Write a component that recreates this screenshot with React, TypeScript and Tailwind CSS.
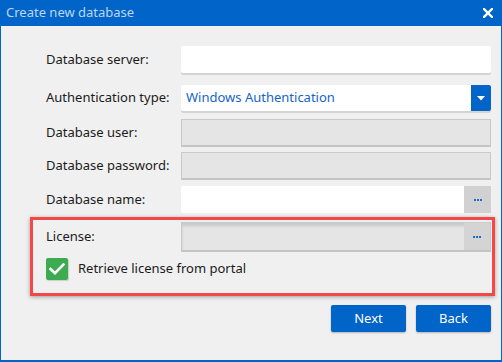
import React from "react";

const Dots = () => (
  <div className="flex gap-[1px]">
    <span className="w-[2px] h-[2px] bg-[#1a6fd0]"></span>
    <span className="w-[2px] h-[2px] bg-[#1a6fd0]"></span>
    <span className="w-[2px] h-[2px] bg-[#1a6fd0]"></span>
  </div>
);

const Label = ({ children }: { children: React.ReactNode }) => (
  <div className="w-[135px] shrink-0 text-[13px] text-[#1b1b1b]">{children}</div>
);

const App = () => {
  return (
    <div
      className="w-[502px] h-[362px] flex flex-col bg-[#0064c8]"
      style={{ fontFamily: '"Noto Sans", "Open Sans", sans-serif' }}
    >
      {/* Title bar */}
      <div className="h-[26px] shrink-0 flex items-center justify-between pl-[6px] pr-[8px]">
        <span className="text-[13px] text-[#bcd6f2]">Create new database</span>
        <svg width="10" height="10" viewBox="0 0 10 10" className="mr-[1px]">
          <path d="M1 1 L9 9 M9 1 L1 9" stroke="#fff" strokeWidth="2.4" strokeLinecap="square" />
        </svg>
      </div>

      {/* Body */}
      <div className="flex-1 mx-[1px] mb-[2px] bg-[#f0f0f0] flex flex-col pl-[29px] pr-[6px] pt-[20px]">
        {/* Database server */}
        <div className="flex items-center pl-[16px] pr-[4px]">
          <Label>Database server:</Label>
          <div className="flex-1 h-[27px] bg-white rounded-[2px] shadow-[0_2px_0_#d4d4d4]"></div>
        </div>

        {/* Authentication type */}
        <div className="flex items-center pl-[16px] pr-[4px] mt-[12px]">
          <Label>Authentication type:</Label>
          <div className="flex-1 h-[26px] flex bg-white rounded-[2px] shadow-[0_2px_0_#d4d4d4]">
            <div className="flex-1 flex items-center pl-[5px] text-[13px] text-[#1565c8]">
              Windows Authentication
            </div>
            <div className="w-[20px] bg-[#0064c8] rounded-r-[2px] flex items-center justify-center">
              <svg width="8" height="5" viewBox="0 0 8 5">
                <path d="M0 0 H8 L4 4.5 Z" fill="#fff" />
              </svg>
            </div>
          </div>
        </div>

        {/* Database user */}
        <div className="flex items-center pl-[16px] pr-[4px] mt-[8px]">
          <Label>Database user:</Label>
          <div className="flex-1 h-[28px] bg-[#e5e5e5] border border-[#cacaca] border-b-2 border-b-[#c4c4c4]"></div>
        </div>

        {/* Database password */}
        <div className="flex items-center pl-[16px] pr-[4px] mt-[5px]">
          <Label>Database password:</Label>
          <div className="flex-1 h-[28px] bg-[#e5e5e5] border border-[#cacaca] border-b-2 border-b-[#c4c4c4]"></div>
        </div>

        {/* Database name */}
        <div className="flex items-center pl-[16px] pr-[4px] mt-[6px]">
          <Label>Database name:</Label>
          <div className="flex-1 h-[27px] flex bg-white rounded-l-[2px]">
            <div className="flex-1"></div>
            <div className="w-[27px] bg-[#d1d1d1] flex items-center justify-center">
              <Dots />
            </div>
          </div>
        </div>

        {/* Highlighted license block */}
        <div className="mt-[4px] border-[3px] border-[#f24848] shadow-[0_1px_4px_rgba(0,0,0,0.35)] pl-[13px] pr-[1px] pt-[2px] h-[79px]">
          <div className="flex items-center">
            <Label>License:</Label>
            <div className="flex-1 h-[30px] flex bg-[#e5e5e5] border border-[#cacaca] border-b-2 border-b-[#c4c4c4] shadow-[inset_0_3px_3px_rgba(0,0,0,0.12)]">
              <div className="flex-1"></div>
              <div className="w-[26px] bg-[#d4d4d4] flex items-center justify-center">
                <Dots />
              </div>
            </div>
          </div>
          <div className="flex items-center mt-[6px]">
            <div className="w-[22px] h-[22px] rounded-[2px] bg-[#3dab50] flex items-center justify-center shadow-[1px_1px_1px_rgba(0,0,0,0.15)]">
              <svg width="16" height="12" viewBox="0 0 16 12">
                <path d="M1.5 6 L6 10.2 L14.5 1.5" stroke="#fff" strokeWidth="2.6" fill="none" strokeLinecap="square" />
              </svg>
            </div>
            <span className="ml-[10px] text-[13px] text-[#1b1b1b]">Retrieve license from portal</span>
          </div>
        </div>

        {/* Buttons */}
        <div className="flex justify-end gap-[10px] mt-[9px] pr-[4px]">
          <button className="w-[75px] h-[27px] bg-[#0064c8] rounded-[2px] text-white text-[13px] shadow-[0_1px_2px_rgba(0,0,0,0.25)]">
            Next
          </button>
          <button className="w-[75px] h-[27px] bg-[#0064c8] rounded-[2px] text-white text-[13px] shadow-[0_1px_2px_rgba(0,0,0,0.25)]">
            Back
          </button>
        </div>
      </div>
    </div>
  );
};

export default App;
